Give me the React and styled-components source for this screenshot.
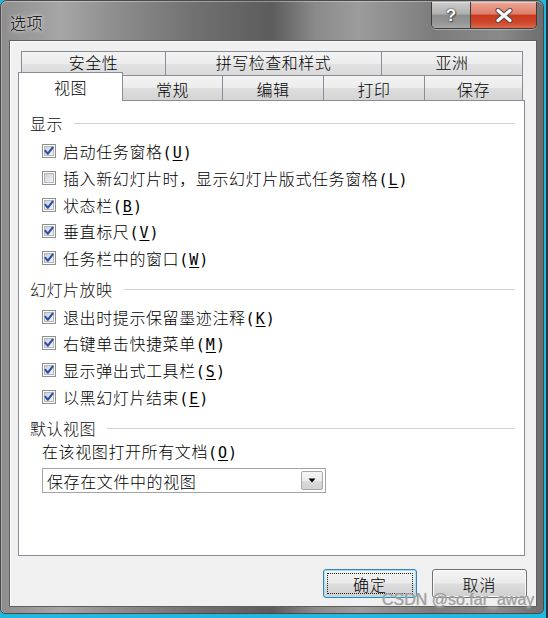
import React from 'react';
import styled, { createGlobalStyle } from 'styled-components';

const CJK = `"Noto Sans CJK SC", "Noto Sans", sans-serif`;

const GlobalStyle = createGlobalStyle`
  html, body { margin: 0; padding: 0; }
  body { font-family: ${CJK}; font-weight: 300; color: #000; }
  #root { width: 548px; height: 618px; }
`;

const Desktop = styled.div`
  position: relative;
  width: 548px;
  height: 618px;
  box-sizing: border-box;
  padding: 0 4px 4px 0;
  overflow: hidden;
  background: linear-gradient(to right, #22b9de 0, #22b9de 546px, #2a3440 546px);
`;

const Window = styled.div`
  width: 544px;
  height: 614px;
  box-sizing: border-box;
  display: flex;
  flex-direction: column;
  border: 1px solid #4a4a4a;
  border-radius: 7px 7px 5px 5px;
  padding: 0 6px 6px 8px;
  background: linear-gradient(
    to right,
    #8e8e8e 0%,
    #a6a6a6 11%,
    #909090 20%,
    #707070 36%,
    #5c5c5c 50%,
    #8a8a8a 58%,
    #9c9c9c 66%,
    #7c7c7c 80%,
    #8a8a8a 92%,
    #6e6e6e 100%
  );
  box-shadow: inset 0 1px 0 rgba(255, 255, 255, 0.35), inset 1px 0 0 rgba(255, 255, 255, 0.25);
`;

const TitleBar = styled.div`
  height: 39px;
  flex: none;
  display: flex;
  justify-content: space-between;
  align-items: flex-start;
`;

const Title = styled.div`
  margin-left: 1px;
  padding-top: 11px;
  font-size: 16px;
  line-height: 20px;
  letter-spacing: 0.5px;
  color: #000;
  text-shadow: 0 0 6px rgba(255, 255, 255, 0.9), 0 0 3px rgba(255, 255, 255, 0.8);
`;

const CaptionButtons = styled.div`
  margin-top: 1px;
  display: flex;
  border: 1px solid #3c3c3c;
  border-top: none;
  border-radius: 0 0 5px 5px;
  overflow: hidden;
  box-shadow: 0 1px 0 rgba(255, 255, 255, 0.35);
`;

const CaptionButton = styled.div`
  width: ${(p) => p.$w}px;
  height: 26px;
  box-sizing: border-box;
  display: flex;
  align-items: center;
  justify-content: center;
  background: ${(p) =>
    p.$close
      ? 'linear-gradient(#eba698 0%, #de7f6a 45%, #c93a20 52%, #d0482c 80%, #dc6a4e 100%)'
      : 'linear-gradient(#cdcdcd 0%, #b0b0b0 45%, #8e8e8e 52%, #969696 80%, #a8a8a8 100%)'};
  border-right: ${(p) => (p.$close ? 'none' : '1px solid #3c3c3c')};
  box-shadow: inset 0 1px 0 rgba(255, 255, 255, 0.4);
`;

const HelpMark = styled.span`
  font-family: "Liberation Sans", Arial, sans-serif;
  font-weight: bold;
  font-size: 17px;
  line-height: 1;
  color: #fff;
  text-shadow: 0 0 1px #333, 0 0 2px #444, 1px 1px 1px #555;
`;

const Client = styled.div`
  flex: 1;
  display: flex;
  flex-direction: column;
  background: #f0f0f0;
  border: 1px solid #5e5e5e;
  box-shadow: inset 1px 1px 0 #fbfbfb;
  padding: 10px 9px 8px 8px;
  box-sizing: border-box;
`;

const TabControl = styled.div`
  margin-right: 2px;
  display: flex;
  flex-direction: column;
`;

const TabRow = styled.div`
  display: flex;
  height: ${(p) => p.$h}px;
  padding-left: ${(p) => p.$pl}px;
  align-items: flex-end;
`;

const BackTab = styled.div`
  width: ${(p) => p.$w}px;
  height: 100%;
  box-sizing: border-box;
  display: flex;
  justify-content: center;
  padding-top: 0;
  font-size: 16px;
  line-height: 21px;
  letter-spacing: 0.5px;
  border-top: 1px solid #898c95;
  border-left: 1px solid #898c95;
  &:last-child { border-right: 1px solid #898c95; }
  background: linear-gradient(#f3f3f3 0%, #ececec 50%, #e2e2e2 52%, #dadada 100%);
`;

const FrontTab = styled.div`
  width: ${(p) => p.$w}px;
  height: 100%;
  box-sizing: border-box;
  display: flex;
  justify-content: center;
  padding-top: 2px;
  font-size: 16px;
  line-height: 22px;
  letter-spacing: 0.5px;
  border-top: 1px solid #898c95;
  border-right: 1px solid #898c95;
  background: linear-gradient(#f3f3f3 0%, #ececec 50%, #dedede 52%, #d4d4d4 100%);
`;

const ActiveTab = styled.div`
  position: relative;
  z-index: 1;
  width: ${(p) => p.$w}px;
  height: 29px;
  margin-bottom: -1px;
  box-sizing: border-box;
  display: flex;
  justify-content: center;
  padding-top: 3px;
  font-size: 16px;
  line-height: 22px;
  letter-spacing: 0.5px;
  background: #fff;
  border: 1px solid #898c95;
  border-bottom: none;
`;

const Panel = styled.div`
  height: 456px;
  box-sizing: border-box;
  background: #fff;
  border: 1px solid #898c95;
  padding: 10px 9px 0 11px;
  display: flex;
  flex-direction: column;
`;

const GroupHeader = styled.div`
  height: 24px;
  flex: none;
  display: flex;
  align-items: center;
  margin-top: ${(p) => p.$mt || 0}px;
  font-size: 16px;
  letter-spacing: 0.5px;
  color: #111;
`;

const GroupLine = styled.div`
  flex: 1;
  height: 1px;
  margin-left: 11px;
  background: #d0d0d0;
`;

const CheckList = styled.div`
  margin-left: 12px;
  margin-top: ${(p) => p.$mt || 0}px;
  display: flex;
  flex-direction: column;
`;

const CheckRow = styled.div`
  height: 26.7px;
  display: flex;
  align-items: center;
  gap: 7px;
  font-size: 16px;
  letter-spacing: 0.6px;
  white-space: nowrap;
`;

const BoxSvg = styled.svg`
  flex: none;
  display: block;
`;

const Key = styled.span`
  font-family: "DejaVu Sans Mono", "Liberation Mono", monospace;
  font-weight: normal;
  font-size: 15px;
  letter-spacing: 1px;
  & u { text-underline-offset: 2px; }
`;

const FieldLabel = styled.div`
  margin: 1px 0 0 12px;
  height: 20px;
  line-height: 20px;
  font-size: 16px;
  letter-spacing: 0.6px;
  white-space: nowrap;
`;

const Select = styled.div`
  margin: 7px 0 0 12px;
  width: 284px;
  height: 25px;
  box-sizing: border-box;
  display: flex;
  align-items: center;
  padding: 0 2px 0 4px;
  background: #fff;
  border: 1px solid #a3a3a3;
  font-size: 16px;
  letter-spacing: 0.6px;
`;

const SelectText = styled.span`
  flex: 1;
  white-space: nowrap;
`;

const SelectArrow = styled.div`
  width: 22px;
  height: 19px;
  box-sizing: border-box;
  display: flex;
  align-items: center;
  justify-content: center;
  border: 1px solid #a8a8a8;
  border-radius: 2px;
  background: linear-gradient(#f6f6f6 0%, #ececec 50%, #dcdcdc 52%, #d0d0d0 100%);
`;

const ButtonRow = styled.div`
  margin-top: 13px;
  display: flex;
  justify-content: flex-end;
  gap: 15px;
`;

const DialogButton = styled.div`
  width: ${(p) => p.$w}px;
  height: 29px;
  box-sizing: border-box;
  display: flex;
  align-items: center;
  justify-content: center;
  font-size: 16px;
  letter-spacing: 1px;
  border-radius: 3px;
  border: 1px solid ${(p) => (p.$default ? '#3c7fb1' : '#707070')};
  background: linear-gradient(#f4f4f4 0%, #ebebeb 48%, #dddddd 52%, #cfcfcf 100%);
  box-shadow: inset 0 0 0 1px ${(p) => (p.$default ? '#9fe3f8' : '#fcfcfc')};
  position: relative;
`;

const FocusRing = styled.span`
  position: absolute;
  inset: 3px;
  border: 1px dotted #222;
  pointer-events: none;
`;

const Watermark = styled.div`
  position: absolute;
  left: 382px;
  top: 590px;
  font-family: "Liberation Sans", Arial, sans-serif;
  font-weight: normal;
  font-size: 16px;
  line-height: 20px;
  color: rgba(160, 160, 160, 0.85);
  text-shadow: 0 0 1px rgba(90, 90, 90, 0.6), 0 0 2px rgba(255, 255, 255, 0.8);
  white-space: nowrap;
  pointer-events: none;
`;

function CheckBox({ checked }) {
  return (
    <BoxSvg width="14" height="14" viewBox="0 0 14 14">
      <defs>
        <linearGradient id="cbfill" x1="0" y1="0" x2="1" y2="1">
          <stop offset="0" stopColor="#c9ced5" />
          <stop offset="1" stopColor="#f6f6f6" />
        </linearGradient>
      </defs>
      <rect x="0.5" y="0.5" width="13" height="13" fill="#fdfdfd" stroke="#8e8f8f" />
      <rect x="2.5" y="2.5" width="9" height="9" fill="url(#cbfill)" stroke="#b2b7bd" />
      {checked && (
        <path
          d="M3.4 6.9 L5.9 9.7 L10.6 3.6"
          fill="none"
          stroke="#2b4da6"
          strokeWidth="2.1"
          strokeLinecap="round"
          strokeLinejoin="round"
        />
      )}
    </BoxSvg>
  );
}

function Check({ checked = true, text, k }) {
  return (
    <CheckRow>
      <CheckBox checked={checked} />
      <span>
        {text}
        <Key>
          (<u>{k}</u>)
        </Key>
      </span>
    </CheckRow>
  );
}

function CloseGlyph() {
  return (
    <svg width="20" height="15" viewBox="0 0 20 15">
      <path d="M4 2.5 L16 12.5 M16 2.5 L4 12.5" stroke="#4a4a4a" strokeWidth="5.2" strokeLinecap="round" />
      <path d="M4 2.5 L16 12.5 M16 2.5 L4 12.5" stroke="#ffffff" strokeWidth="3.2" strokeLinecap="round" />
    </svg>
  );
}

export default function App() {
  return (
    <>
      <GlobalStyle />
      <Desktop>
        <Window>
          <TitleBar>
            <Title>选项</Title>
            <CaptionButtons>
              <CaptionButton $w={39}>
                <HelpMark>?</HelpMark>
              </CaptionButton>
              <CaptionButton $w={65} $close>
                <CloseGlyph />
              </CaptionButton>
            </CaptionButtons>
          </TitleBar>
          <Client>
            <TabControl>
              <TabRow $h={24} $pl={3}>
                <BackTab $w={144}>安全性</BackTab>
                <BackTab $w={216}>拼写检查和样式</BackTab>
                <BackTab $w={142}>亚洲</BackTab>
              </TabRow>
              <TabRow $h={25} $pl={0}>
                <ActiveTab $w={105}>视图</ActiveTab>
                <FrontTab $w={100}>常规</FrontTab>
                <FrontTab $w={101}>编辑</FrontTab>
                <FrontTab $w={101}>打印</FrontTab>
                <FrontTab $w={98}>保存</FrontTab>
              </TabRow>
              <Panel>
                <GroupHeader>
                  显示
                  <GroupLine />
                </GroupHeader>
                <CheckList $mt={3}>
                  <Check text="启动任务窗格" k="U" />
                  <Check checked={false} text="插入新幻灯片时，显示幻灯片版式任务窗格" k="L" />
                  <Check text="状态栏" k="B" />
                  <Check text="垂直标尺" k="V" />
                  <Check text="任务栏中的窗口" k="W" />
                </CheckList>
                <GroupHeader $mt={6}>
                  幻灯片放映
                  <GroupLine />
                </GroupHeader>
                <CheckList $mt={2}>
                  <Check text="退出时提示保留墨迹注释" k="K" />
                  <Check text="右键单击快捷菜单" k="M" />
                  <Check text="显示弹出式工具栏" k="S" />
                  <Check text="以黑幻灯片结束" k="E" />
                </CheckList>
                <GroupHeader $mt={6}>
                  默认视图
                  <GroupLine />
                </GroupHeader>
                <FieldLabel>
                  在该视图打开所有文档
                  <Key>
                    (<u>O</u>)
                  </Key>
                </FieldLabel>
                <Select>
                  <SelectText>保存在文件中的视图</SelectText>
                  <SelectArrow>
                    <svg width="8" height="5" viewBox="0 0 8 5">
                      <path d="M0.5 0.5 L7.5 0.5 L4 4.5 Z" fill="#000" />
                    </svg>
                  </SelectArrow>
                </Select>
              </Panel>
            </TabControl>
            <ButtonRow>
              <DialogButton $w={94} $default>
                确定
                <FocusRing />
              </DialogButton>
              <DialogButton $w={95}>取消</DialogButton>
            </ButtonRow>
          </Client>
        </Window>
        <Watermark>CSDN @so.far_away</Watermark>
      </Desktop>
    </>
  );
}
